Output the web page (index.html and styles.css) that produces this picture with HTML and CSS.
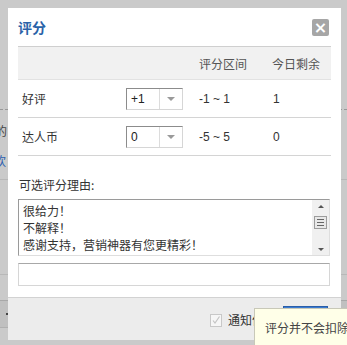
FILE: index.html
```html
<!DOCTYPE html>
<html lang="zh">
<head>
<meta charset="utf-8">
<link rel="stylesheet" href="styles.css">
</head>
<body>
<div class="backdrop">
  <div class="bg-dash"></div>
  <div class="bg-text">的</div>
  <div class="bg-link">饮</div>
  <div class="bg-line l1"></div>
  <div class="bg-line l2"></div>
  <div class="bg-band"><span class="bg-dot"></span></div>
</div>

<div class="dialog">
  <div class="dlg-head">
    <h2 class="dlg-title">评分</h2>
    <span class="dlg-close">×</span>
  </div>
  <div class="dlg-body">
    <div class="rate-table">
      <div class="rt-row rt-header">
        <span></span><span></span><span>评分区间</span><span>今日剩余</span>
      </div>
      <div class="rt-row">
        <span class="rt-label">好评</span>
        <span class="select"><span class="sel-val">+1</span><span class="sel-btn"><i class="tri"></i></span></span>
        <span>-1 ~ 1</span>
        <span>1</span>
      </div>
      <div class="rt-row">
        <span class="rt-label">达人币</span>
        <span class="select"><span class="sel-val">0</span><span class="sel-btn"><i class="tri"></i></span></span>
        <span>-5 ~ 5</span>
        <span>0</span>
      </div>
    </div>
    <div class="reason-label">可选评分理由:</div>
    <div class="listbox">
      <div class="lb-items">
        <div>很给力！</div>
        <div>不解释！</div>
        <div>感谢支持，营销神器有您更精彩！</div>
      </div>
      <div class="lb-scroll">
        <i class="arr up"></i>
        <span class="thumb"><i></i><i></i><i></i></span>
        <span class="sc-space"></span>
        <i class="arr down"></i>
      </div>
    </div>
    <div class="text-input"></div>
  </div>
  <div class="dlg-foot">
    <span class="chk"><svg width="10" height="10" viewBox="0 0 10 10"><path d="M2 5.5 L4 8 L8.5 1.5" fill="none" stroke="#c4c4c4" stroke-width="1.2"/></svg></span>
    <span class="notify">通知作者</span>
    <span class="btn"></span>
  </div>
  <div class="tooltip">评分并不会扣除您的积分</div>
</div>
</body>
</html>
```
FILE: styles.css
```css
html, body {
  margin: 0;
  padding: 0;
}
body {
  width: 347px;
  height: 345px;
  overflow: hidden;
  background: #cacaca;
  position: relative;
  font-family: "Noto Sans CJK SC", "Liberation Sans", sans-serif;
  font-size: 12px;
  color: #333;
}
.backdrop {
  position: absolute;
  inset: 0;
}
.bg-dash {
  position: absolute;
  left: 0;
  top: 109px;
  width: 347px;
  border-top: 1px dashed #999;
}
.bg-text {
  position: absolute;
  left: -5px;
  top: 122px;
  font-size: 12px;
  color: #444;
}
.bg-link {
  position: absolute;
  left: -6px;
  top: 152px;
  font-size: 12px;
  color: #2a5fb0;
}
.bg-line {
  position: absolute;
  left: 0;
  width: 347px;
  border-top: 1px solid #b8b8b8;
}
.bg-line.l1 { top: 179px; }
.bg-line.l2 { top: 274px; }
.bg-band {
  position: absolute;
  left: 0;
  top: 300px;
  width: 347px;
  height: 26px;
  background: #c0c0c0;
  border-top: 1px solid #a8a8a8;
  border-bottom: 1px solid #b0b0b0;
}
.bg-dot {
  position: absolute;
  left: 6px;
  top: 12px;
  width: 2px;
  height: 2px;
  background: #444;
}

.dialog {
  position: absolute;
  left: 8px;
  top: 8px;
  width: 333px;
  height: 332px;
  background: #fff;
  display: flex;
  flex-direction: column;
}
.dlg-head {
  height: 38px;
  display: flex;
  align-items: center;
  justify-content: space-between;
  padding: 0 12px 0 10px;
}
.dlg-title {
  margin: 0;
  font-size: 14px;
  font-weight: bold;
  color: #2a62a8;
  line-height: 20px;
}
.dlg-close {
  width: 17px;
  height: 17px;
  border-radius: 2px;
  background: #a6a6a6;
  color: #fff;
  font-family: "DejaVu Sans", sans-serif;
  font-weight: bold;
  font-size: 16px;
  line-height: 17px;
  text-align: center;
  margin-top: 1px;
}
.dlg-body {
  padding: 0 10px;
  flex: 1;
}
.rate-table {
  border-top: 1px solid #cfcfcf;
}
.rt-row {
  display: grid;
  grid-template-columns: 108px 73px 74px 1fr;
  align-items: center;
  height: 37px;
  border-bottom: 1px solid #d4d4d4;
  font-family: "Liberation Sans", "Noto Sans CJK SC", sans-serif;
}
.rt-row > span:first-child {
  padding-left: 4px;
}
.rt-label {
  font-family: "Noto Sans CJK SC", sans-serif;
}
.rt-header {
  height: 32px;
  background: #f1f1f1;
  color: #555;
  font-family: "Noto Sans CJK SC", sans-serif;
  border-bottom: 1px solid #e2e2e2;
}
.rt-header > span:nth-child(4) {
  margin-left: -1px;
}
.select {
  display: flex;
  width: 57px;
  height: 22px;
  box-sizing: border-box;
  border-top: 1px solid #8c8c8c;
  border-left: 1px solid #8c8c8c;
  border-right: 1px solid #d6d6d6;
  border-bottom: 1px solid #d6d6d6;
  background: #fff;
}
.sel-val {
  flex: 1;
  line-height: 20px;
  padding-left: 4px;
  color: #222;
}
.sel-btn {
  width: 22px;
  border-left: 1px solid #dcdcdc;
  display: flex;
  align-items: center;
  justify-content: center;
}
.tri {
  width: 0;
  height: 0;
  border-left: 4px solid transparent;
  border-right: 4px solid transparent;
  border-top: 4px solid #9a9a9a;
}
.reason-label {
  margin-top: 20px;
  line-height: 18px;
  padding-left: 1px;
  color: #333;
}
.listbox {
  margin-top: 5px;
  height: 57px;
  box-sizing: border-box;
  border-top: 1px solid #9a9a9a;
  border-left: 1px solid #9a9a9a;
  border-right: 1px solid #dedede;
  border-bottom: 1px solid #dedede;
  display: flex;
  width: 312px;
}
.lb-items {
  flex: 1;
  padding: 2px 0 0 4px;
  line-height: 17px;
  color: #333;
  overflow: hidden;
}
.lb-scroll {
  width: 17px;
  background: #f0f0f0;
  display: flex;
  flex-direction: column;
  align-items: center;
  padding: 5px 0 4px;
  box-sizing: border-box;
}
.arr {
  width: 0;
  height: 0;
  border-left: 3px solid transparent;
  border-right: 3px solid transparent;
}
.arr.up { border-bottom: 3px solid #555; }
.arr.down { border-top: 3px solid #555; }
.thumb {
  margin-top: 8px;
  width: 13px;
  height: 13px;
  box-sizing: border-box;
  border: 1px solid #9c9c9c;
  background: #e8e8e8;
  display: flex;
  flex-direction: column;
  justify-content: center;
  gap: 2px;
  align-items: center;
}
.thumb i {
  width: 7px;
  height: 1px;
  background: #666;
}
.sc-space { flex: 1; }
.text-input {
  margin-top: 7px;
  width: 312px;
  height: 23px;
  box-sizing: border-box;
  border: 1px solid #d6d6d6;
  border-top-color: #a8a8a8;
}
.dlg-foot {
  height: 43px;
  box-sizing: border-box;
  background: #ececec;
  border-top: 1px solid #d2d2d2;
  display: flex;
  align-items: center;
  padding: 0 13px 0 202px;
}
.chk {
  width: 12px;
  height: 13px;
  box-sizing: border-box;
  border: 1px solid #c8c8c8;
  background: #f6f6f6;
  display: flex;
  align-items: center;
  justify-content: center;
  margin-top: 2px;
}
.notify {
  margin-left: 6px;
  color: #333;
  line-height: 16px;
  margin-top: 1px;
}
.btn {
  margin-left: auto;
  margin-top: -2px;
  width: 45px;
  height: 24px;
  box-sizing: border-box;
  background: #3b7bd0;
  border: 1px solid #2a5ea8;
}
.tooltip {
  position: absolute;
  left: 246px;
  top: 300px;
  width: 130px;
  height: 50px;
  box-sizing: border-box;
  background: #ffffe8;
  border: 1px solid #c8c8b8;
  padding: 10px 0 0 10px;
  white-space: nowrap;
  color: #444;
  font-size: 12px;
  line-height: 18px;
}
```
